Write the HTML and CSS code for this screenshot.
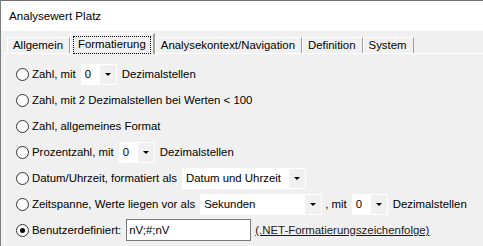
FILE: index.html
```html
<!DOCTYPE html>
<html lang="de">
<head>
  <meta charset="UTF-8" />
  <title>Analysewert Platz</title>
  <link rel="stylesheet" href="styles.css">
</head>
<body>
  <div class="window">
    <div class="titlebar">Analysewert Platz</div>

    <div class="client">
      <div class="tabs">
        <div class="tab">Allgemein</div>
        <div class="tab active"><span class="focus">Formatierung</span></div>
        <div class="tab">Analysekontext/Navigation</div>
        <div class="tab">Definition</div>
        <div class="tab">System</div>
      </div>

      <div class="panel">
        <div class="row">
          <span class="radio"></span>
          <span class="label">Zahl, mit</span>
          <span class="combo digits"><span class="value">0</span><span class="drop"></span></span>
          <span>Dezimalstellen</span>
        </div>

        <div class="row">
          <span class="radio"></span>
          <span class="label">Zahl, mit 2 Dezimalstellen bei Werten &lt; 100</span>
        </div>

        <div class="row">
          <span class="radio"></span>
          <span class="label">Zahl, allgemeines Format</span>
        </div>

        <div class="row">
          <span class="radio"></span>
          <span class="label">Prozentzahl, mit</span>
          <span class="combo digits"><span class="value">0</span><span class="drop"></span></span>
          <span>Dezimalstellen</span>
        </div>

        <div class="row">
          <span class="radio"></span>
          <span class="label">Datum/Uhrzeit, formatiert als</span>
          <span class="combo date"><span class="value">Datum und Uhrzeit</span><span class="drop"></span></span>
        </div>

        <div class="row">
          <span class="radio"></span>
          <span class="label">Zeitspanne, Werte liegen vor als</span>
          <span class="combo unit"><span class="value">Sekunden</span><span class="drop"></span></span>
          <span class="after">, mit</span>
          <span class="combo digits"><span class="value">0</span><span class="drop"></span></span>
          <span>Dezimalstellen</span>
        </div>

        <div class="row">
          <span class="radio checked"></span>
          <span class="label">Benutzerdefiniert:</span>
          <span class="textbox">nV;#;nV</span>
          <a href="#net-format" class="hint">(.NET-Formatierungszeichenfolge)</a>
        </div>
      </div>
    </div>
  </div>
</body>
</html>
```

FILE: styles.css
```css
/* dialog window */
body {
  margin: 0;
  padding: 0;
  font-family: "Liberation Sans", Arial, sans-serif;
  font-size: 11.4px;
  color: #000;
  background-color: #f0f0f0;
  overflow: hidden;
}
.window {
  width: 482px;
  height: 245px;
  border-top: 1px solid #707070;
  border-left: 1px solid #808080;
  overflow: hidden;
}
.titlebar {
  height: 30px;
  line-height: 29px;
  padding-left: 8px;
  background-color: #fff;
  font-size: 11.6px;
}
.client {
  background-color: #f0f0f0;
  height: 214px;
}

/* tab strip */
.tabs {
  display: flex;
  align-items: flex-end;
  height: 20px;
  padding-top: 2px;
  padding-left: 6px;
}
.tab {
  height: 15px;
  line-height: 15px;
  padding: 0 6px 0 5px;
  border-top: 1px solid #fff;
  border-left: 1px solid #fff;
  border-right: 1px solid #a0a0a0;
  white-space: nowrap;
}
.tab.active {
  position: relative;
  z-index: 1;
  height: 20px;
  line-height: 18px;
  margin-bottom: -1px;
  padding: 0 2px 0 2px;
  background-color: #f0f0f0;
  border-right: 2px solid #a0a0a0;
}
.focus {
  display: inline-block;
  height: 16px;
  line-height: 15px;
  margin-top: 2px;
  padding: 0 4px;
  border: 1px dotted #000;
}

/* page content */
.panel {
  margin-left: 3px;
  border-top: 1px solid #fff;
  border-left: 1px solid #fff;
  padding: 7px 0 0 11px;
}
.row {
  display: flex;
  align-items: center;
  height: 26px;
  white-space: nowrap;
}
.radio {
  width: 11px;
  height: 11px;
  border: 1px solid #333;
  border-radius: 50%;
  background-color: #fff;
  display: flex;
  align-items: center;
  justify-content: center;
  flex-shrink: 0;
}
.radio.checked::after {
  content: "";
  width: 5px;
  height: 5px;
  border-radius: 50%;
  background-color: #000;
}
.label {
  margin-left: 3px;
}

/* dropdowns */
.combo {
  display: flex;
  height: 19px;
  margin: 0 5px;
  border: 1px solid #fff;
  background-color: #fff;
}
.combo .value {
  flex: 1;
  line-height: 19px;
  padding-left: 3px;
}
.combo .drop {
  width: 16px;
  background-color: #f0f0f0;
  display: flex;
  align-items: center;
  justify-content: center;
}
.combo .drop::after {
  content: "";
  border-left: 3px solid transparent;
  border-right: 3px solid transparent;
  border-top: 3px solid #000;
}
.combo.digits {
  width: 34px;
}
.combo.date {
  width: 122px;
}
.combo.unit {
  width: 120px;
  margin-right: 3px;
}
.after {
  margin-right: 0;
}

/* custom format */
.textbox {
  width: 121px;
  height: 20px;
  line-height: 20px;
  margin: 0 4px 0 5px;
  padding-left: 2px;
  border: 1px solid #7a7a7a;
  background-color: #fff;
}
.hint {
  color: #1a1a1a;
  text-decoration: underline;
}
```
